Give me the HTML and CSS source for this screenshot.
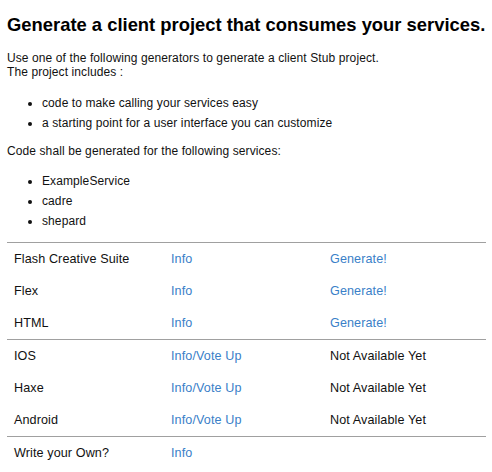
FILE: index.html
```html
<!DOCTYPE html>
<html>
<head>
<meta charset="utf-8">
<link rel="stylesheet" href="styles.css">
</head>
<body>
<div class="page">
  <h1 class="title">Generate a client project that consumes your services.</h1>
  <p class="intro">Use one of the following generators to generate a client Stub project.<br>The project includes :</p>
  <ul class="list list-first">
    <li>code to make calling your services easy</li>
    <li>a starting point for a user interface you can customize</li>
  </ul>
  <p class="services-intro">Code shall be generated for the following services:</p>
  <ul class="list list-services">
    <li>ExampleService</li>
    <li>cadre</li>
    <li>shepard</li>
  </ul>
  <table class="generators">
    <colgroup>
      <col class="col-name">
      <col class="col-info">
      <col class="col-action">
    </colgroup>
    <tbody class="group">
      <tr><td>Flash Creative Suite</td><td><a class="link" href="#">Info</a></td><td><a class="link" href="#">Generate!</a></td></tr>
      <tr><td>Flex</td><td><a class="link" href="#">Info</a></td><td><a class="link" href="#">Generate!</a></td></tr>
      <tr><td>HTML</td><td><a class="link" href="#">Info</a></td><td><a class="link" href="#">Generate!</a></td></tr>
    </tbody>
    <tbody class="group">
      <tr><td>IOS</td><td><a class="link" href="#">Info/Vote Up</a></td><td>Not Available Yet</td></tr>
      <tr><td>Haxe</td><td><a class="link" href="#">Info/Vote Up</a></td><td>Not Available Yet</td></tr>
      <tr><td>Android</td><td><a class="link" href="#">Info/Vote Up</a></td><td>Not Available Yet</td></tr>
    </tbody>
    <tbody class="group">
      <tr><td>Write your Own?</td><td><a class="link" href="#">Info</a></td><td></td></tr>
    </tbody>
  </table>
</div>
</body>
</html>
```
FILE: styles.css
```css
html, body {
  margin: 0;
  padding: 0;
  background: #ffffff;
}
body {
  font-family: "Liberation Sans", Arial, sans-serif;
  font-size: 12px;
  line-height: 14px;
  letter-spacing: 0.1px;
  color: #111111;
}
.page {
  width: 479px;
  margin-left: 7px;
}
.title {
  margin: 14px 0 0 0;
  font-size: 18.4px;
  line-height: 22px;
  font-weight: bold;
  letter-spacing: 0;
  white-space: nowrap;
  color: #000000;
}
.intro {
  margin: 15px 0 0 0;
}
.list {
  margin: 0;
  padding-left: 35px;
  list-style: disc;
}
.list li {
  line-height: 20px;
}
.list-first {
  margin-top: 14px;
}
.services-intro {
  margin: 11px 0 0 0;
}
.list-services {
  margin-top: 13px;
}
.generators {
  margin-top: 11px;
  width: 479px;
  border-collapse: collapse;
  table-layout: fixed;
}
.col-name { width: 157px; }
.col-info { width: 159px; }
.col-action { width: 163px; }
.group {
  border-top: 1px solid #a0a0a0;
}
.generators td {
  padding: 9px 7px 9px 7px;
  height: 14px;
  font-size: 12.6px;
  line-height: 14px;
  vertical-align: middle;
  white-space: nowrap;
}
.link {
  color: #3a80c8;
  text-decoration: none;
}
```
